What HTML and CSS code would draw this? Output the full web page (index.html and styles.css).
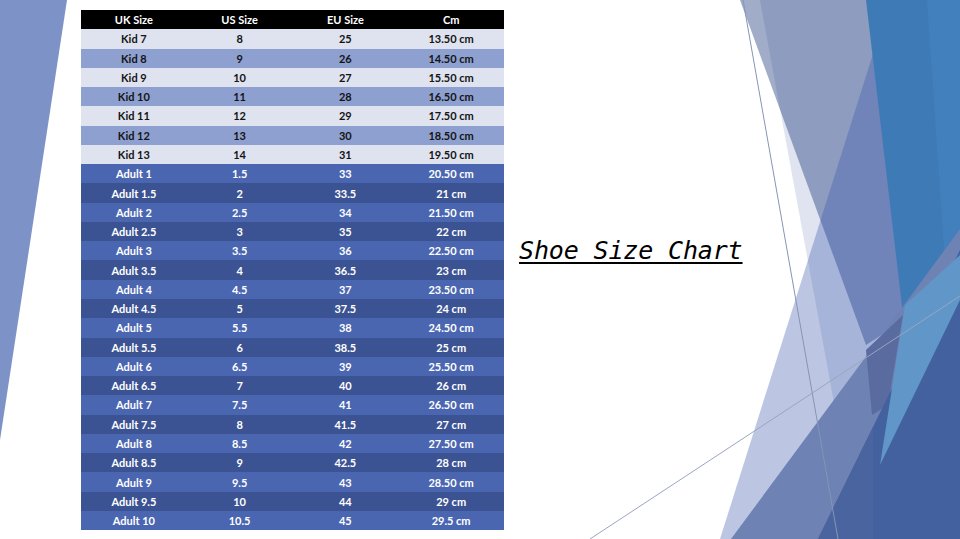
FILE: index.html
```html
<!DOCTYPE html>
<html lang="en">
<head>
<meta charset="utf-8">
<title>Shoe Size Chart</title>
<link rel="stylesheet" href="styles.css">
</head>
<body>
<div class="slide">
  <svg class="decor" width="960" height="539" viewBox="0 0 960 539" aria-hidden="true">
    <polygon points="0,0 67,0 0,440" fill="#7d92c6"/>
    <polygon points="760,0 960,0 960,539 859,539" fill="#dfe4f0"/>
    <polygon points="740,0 900,0 905,320 866,345" fill="rgb(17,48,118)" fill-opacity="0.4"/>
    <polygon points="890,0 960,0 960,539 720,539" fill="rgb(59,88,173)" fill-opacity="0.34"/>
    <polygon points="866,0 960,0 960,250 903,315" fill="#3e7bb6"/>
    <polygon points="927,0 960,0 960,250 945,262" fill="#4280bd"/>
    <polygon points="731,539 893,320 960,229 960,539" fill="#6e82b3"/>
    <polygon points="866,350 903,315 888,405 872,415" fill="#5a6ba0"/>
    <polygon points="818,539 960,250 960,539" fill="#42619e"/>
    <polygon points="818,539 873,427 873,539" fill="#4a64a0"/>
    <polygon points="905,305 960,255 960,300 880,465" fill="#6096c8"/>
    <line x1="743" y1="0" x2="838" y2="539" stroke="#8595b5" stroke-width="1"/>
    <line x1="590" y1="539" x2="960" y2="296" stroke="#9aa5c0" stroke-width="1"/>
  </svg>
  <div class="content">
    <div class="chart">
      <div class="row head"><span>UK Size</span><span>US Size</span><span>EU Size</span><span>Cm</span></div>
      <div class="row kid-a"><span>Kid 7</span><span>8</span><span>25</span><span>13.50 cm</span></div>
      <div class="row kid-b"><span>Kid 8</span><span>9</span><span>26</span><span>14.50 cm</span></div>
      <div class="row kid-a"><span>Kid 9</span><span>10</span><span>27</span><span>15.50 cm</span></div>
      <div class="row kid-b"><span>Kid 10</span><span>11</span><span>28</span><span>16.50 cm</span></div>
      <div class="row kid-a"><span>Kid 11</span><span>12</span><span>29</span><span>17.50 cm</span></div>
      <div class="row kid-b"><span>Kid 12</span><span>13</span><span>30</span><span>18.50 cm</span></div>
      <div class="row kid-a"><span>Kid 13</span><span>14</span><span>31</span><span>19.50 cm</span></div>
      <div class="row ad-a"><span>Adult 1</span><span>1.5</span><span>33</span><span>20.50 cm</span></div>
      <div class="row ad-b"><span>Adult 1.5</span><span>2</span><span>33.5</span><span>21 cm</span></div>
      <div class="row ad-a"><span>Adult 2</span><span>2.5</span><span>34</span><span>21.50 cm</span></div>
      <div class="row ad-b"><span>Adult 2.5</span><span>3</span><span>35</span><span>22 cm</span></div>
      <div class="row ad-a"><span>Adult 3</span><span>3.5</span><span>36</span><span>22.50 cm</span></div>
      <div class="row ad-b"><span>Adult 3.5</span><span>4</span><span>36.5</span><span>23 cm</span></div>
      <div class="row ad-a"><span>Adult 4</span><span>4.5</span><span>37</span><span>23.50 cm</span></div>
      <div class="row ad-b"><span>Adult 4.5</span><span>5</span><span>37.5</span><span>24 cm</span></div>
      <div class="row ad-a"><span>Adult 5</span><span>5.5</span><span>38</span><span>24.50 cm</span></div>
      <div class="row ad-b"><span>Adult 5.5</span><span>6</span><span>38.5</span><span>25 cm</span></div>
      <div class="row ad-a"><span>Adult 6</span><span>6.5</span><span>39</span><span>25.50 cm</span></div>
      <div class="row ad-b"><span>Adult 6.5</span><span>7</span><span>40</span><span>26 cm</span></div>
      <div class="row ad-a"><span>Adult 7</span><span>7.5</span><span>41</span><span>26.50 cm</span></div>
      <div class="row ad-b"><span>Adult 7.5</span><span>8</span><span>41.5</span><span>27 cm</span></div>
      <div class="row ad-a"><span>Adult 8</span><span>8.5</span><span>42</span><span>27.50 cm</span></div>
      <div class="row ad-b"><span>Adult 8.5</span><span>9</span><span>42.5</span><span>28 cm</span></div>
      <div class="row ad-a"><span>Adult 9</span><span>9.5</span><span>43</span><span>28.50 cm</span></div>
      <div class="row ad-b"><span>Adult 9.5</span><span>10</span><span>44</span><span>29 cm</span></div>
      <div class="row ad-a"><span>Adult 10</span><span>10.5</span><span>45</span><span>29.5 cm</span></div>
    </div>
    <h1 class="title">Shoe Size Chart</h1>
  </div>
</div>
</body>
</html>
```
FILE: styles.css
```css
html, body {
  margin: 0;
  padding: 0;
  background: #ffffff;
}

.slide {
  position: relative;
  width: 960px;
  height: 539px;
  overflow: hidden;
  background: #ffffff;
}

.decor {
  position: absolute;
  left: 0;
  top: 0;
  display: block;
}

.content {
  position: relative;
  display: flex;
  align-items: flex-start;
  gap: 15px;
  padding: 10px 0 0 81px;
}

.chart {
  width: 423px;
  height: 520px;
  display: flex;
  flex-direction: column;
  font-family: "Lato", "Open Sans", sans-serif;
  font-weight: 700;
  font-size: 11px;
}

.row {
  flex: 1 1 0;
  display: grid;
  grid-template-columns: repeat(4, 1fr);
  align-items: center;
  text-align: center;
}

.head { background: #000000; color: #ffffff; }
.kid-a { background: #dfe3ef; color: #141414; }
.kid-b { background: #8da0d0; color: #141414; }
.ad-a { background: #4a66b0; color: #ffffff; }
.ad-b { background: #3c5393; color: #ffffff; }

.title {
  margin: 226px 0 0 0;
  font-family: "DejaVu Sans Mono", monospace;
  font-style: italic;
  font-weight: 400;
  font-size: 25px;
  line-height: 30px;
  letter-spacing: -0.15px;
  color: #000000;
  text-decoration: underline;
  text-decoration-thickness: 2px;
  text-underline-offset: 3px;
}
```
